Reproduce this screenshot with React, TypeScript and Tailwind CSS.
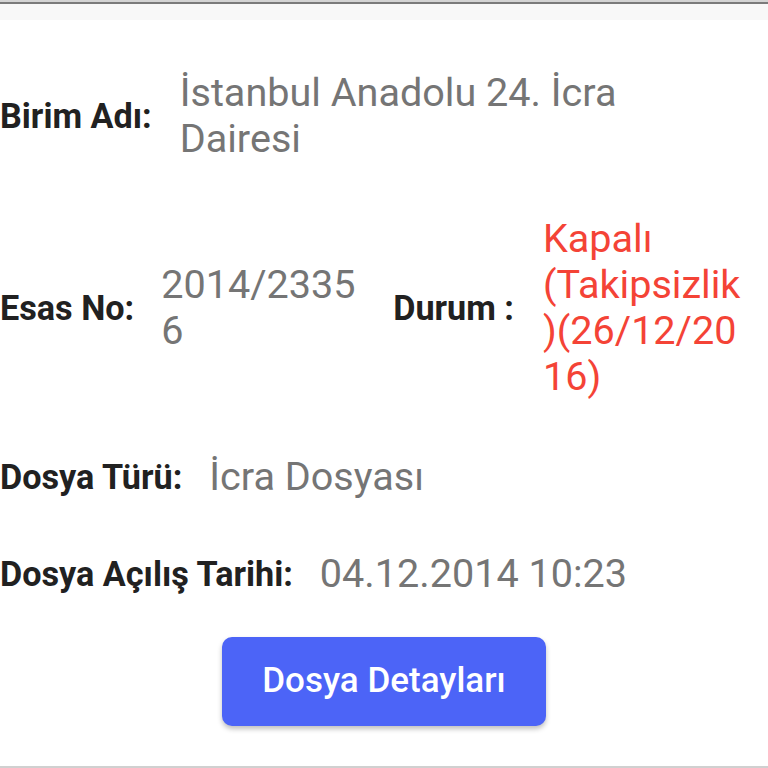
import React from "react";

export default function App() {
  return (
    <div className="w-[768px] h-[768px] bg-white flex flex-col overflow-hidden font-['Roboto','Liberation_Sans',sans-serif]">
      <div className="h-[2px] bg-[#d4d4d4]" />
      <div className="h-[2px] bg-[#7b7b7b]" />
      <div className="h-[16px] bg-[#f8f8f8]" />

      <div className="flex-1 flex flex-col">
        {/* Row 1 */}
        <div className="mt-[50px] flex items-center gap-[28px]">
          <span className="text-[34.2px] font-bold text-[#212121] leading-[40px] whitespace-nowrap">Birim Adı:</span>
          <span className="w-[500px] text-[39.6px] leading-[46px] text-[#757575]">İstanbul Anadolu 24. İcra Dairesi</span>
        </div>

        {/* Row 2 */}
        <div className="mt-[54px] flex items-center">
          <span className="text-[34.2px] font-bold text-[#212121] leading-[40px] whitespace-nowrap">Esas No:</span>
          <span className="ml-[27px] w-[205px] text-[39.6px] leading-[46px] text-[#757575] break-words">2014/23356</span>
          <span className="ml-[27px] text-[34.2px] font-bold text-[#212121] leading-[40px] whitespace-nowrap">Durum :</span>
          <span className="ml-[29px] w-[205px] text-[39.6px] leading-[46px] text-[#f44336] [overflow-wrap:anywhere]">{"Kapalı (Takipsizlik)\u2060(26/12/2016)"}</span>
        </div>

        {/* Row 3 */}
        <div className="mt-[54px] flex items-center gap-[27px]">
          <span className="text-[34.2px] font-bold text-[#212121] leading-[40px] whitespace-nowrap">Dosya Türü:</span>
          <span className="text-[39.6px] leading-[46px] text-[#757575]">İcra Dosyası</span>
        </div>

        {/* Row 4 */}
        <div className="mt-[51px] flex items-center gap-[27px]">
          <span className="text-[34.2px] font-bold text-[#212121] leading-[40px] whitespace-nowrap">Dosya Açılış Tarihi:</span>
          <span className="text-[39.6px] leading-[46px] text-[#757575]">04.12.2014 10:23</span>
        </div>

        {/* Button */}
        <div className="mt-[40px] flex justify-center">
          <button className="w-[324px] h-[89px] rounded-[10px] bg-[#4c64f7] text-white text-[35px] font-medium shadow-[0_3px_5px_rgba(0,0,0,0.25)] flex items-center justify-center">
            Dosya Detayları
          </button>
        </div>
      </div>

      <div className="h-[2px] bg-[#d0d0d0]" />
    </div>
  );
}
